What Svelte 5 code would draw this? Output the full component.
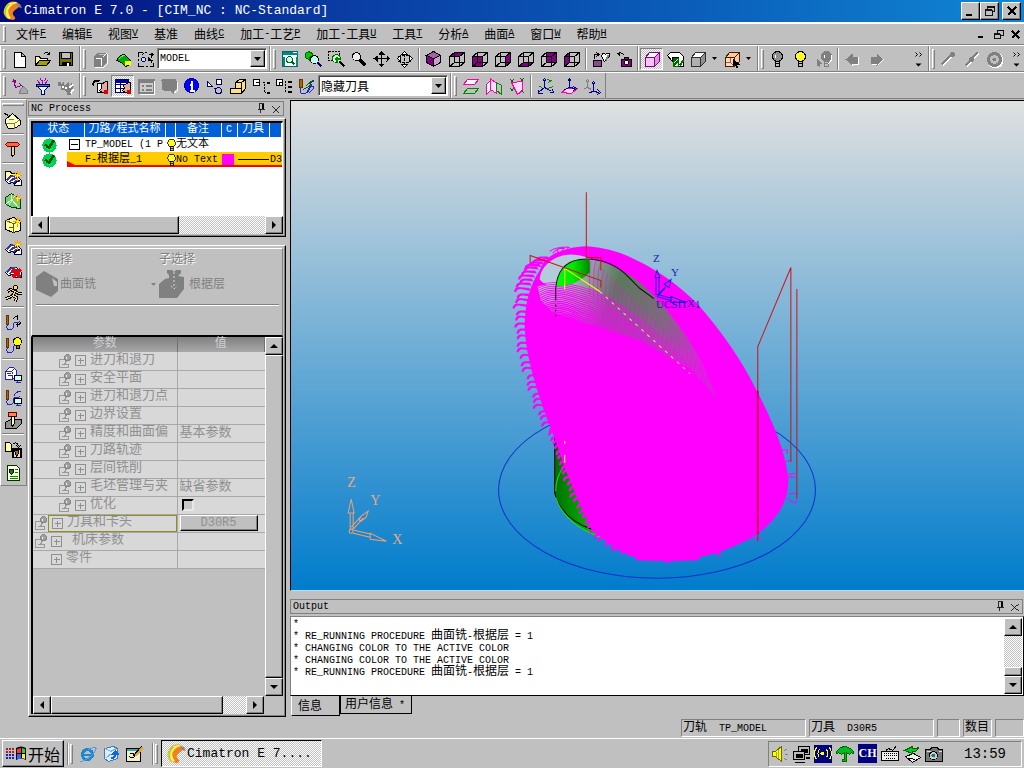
<script>
  const P = (d, f = 'none', s = 'none', w = 1) => `<path d="${d}" fill="${f}" stroke="${s}" stroke-width="${w}"/>`;
  const C = (x, y, r, f = 'none', s = 'none', w = 1) => `<circle cx="${x}" cy="${y}" r="${r}" fill="${f}" stroke="${s}" stroke-width="${w}"/>`;

  const K = '#000';
  const wire = 'M1 6h10v10h-10zM1 6l5-4h10l-5 4M16 2v10l-5 4M6 2v10l-5 4M6 12h10';
  const cube = (face) => P(face, '#800080') + P(wire, 'none', K);
  const solid = (f, top, side, s = K) => P('M2 7h9v9h-9z', f, s) + P('M2 7l4-5h10l-5 5z', top, s) + P('M11 7l5-5v9l-5 5z', side, s);
  const bulb = (f, x = 0, s = K) => C(8 + x, 6, 5, f, s) + P(`M${6 + x} 11h4v5h-4zM${6 + x} 13h4`, '#c0c0c0', s) + P(`M${6 + x} 4v3`, 'none', '#fff');
  const star = P('M13 1v10M8 6h10M10 3l6 6M16 3l-6 6', 'none', '#f90') + P('M13 4v4M11 6h4', 'none', '#ff0');
  const stripes = P('M1 11l5-5h6l5 5v5h-6l-3-3l-4 1z', '#fff', '#003') + P('M2 11q4-6 9-4M5 13q3-5 8-4M9 14q2-3 6-3', 'none', '#3a3a9c', 2) + P('M10 16q0-4 6-5', 'none', '#003');
  const path = P('M2 2h2v9h-2z', '#a60', '#630') + P('M3 11q-2 5 2 5t4-4q0-4 2-3t4-1', 'none', '#22c', 1);
  const monitor = P('M10 10h7v5h-7z', '#cff', K) + P('M11 17h5M13 15v2', 'none', '#22c');
  const dn = '#808080';

  const icons = {
    new: P('M3 2h7l4 4v11h-11zM10 2v4h4', '#fff', K),
    open: P('M1 15v-9h4l1 2h7v2', '#ffff9c', K) + P('M1 15l4-5h11l-4 5z', '#a0a000', K) + P('M9 4q3-4 6 0M15 1v3h-3', 'none', K),
    save: P('M2 2h13v13h-13z', '#707000', K) + P('M4 2h9v6h-9z', '#c0c0c0', K) + P('M4 11h9v4h-9z', K) + P('M9 12h2v3h-2z', '#fff'),
    layers: P('M2 6l4-4h9v10l-4 4h-9z', dn) + P('M4 8h6v7M11 7l4-4M3 17h9l4-4v-10', 'none', '#fff') + P('M7 4h6', 'none', '#c0c0c0'),
    part: P('M2 10q3-6 8-6l6 6v4l-5 2q-4-5-9-6z', '#0a0', K) + P('M10 10l6 1v3l-5 1z', '#ff0') + P('M4 9q3-4 6-4', 'none', '#5f5'),
    convert: P('M5 2h-4v4M1 12v4h5M12 16h4v-4', 'none', K) + P('M7 2h2M1 8v2M8 16h2', 'none', K) + C(6, 9, 2, '#cdf', '#006') + P('M11 4h5M14 2v5M4 5l2-2', 'none', K) + P('M11 7l3 3h-3zM13 13l2-3', '#000', K) + P('M12 4l3-2v4z', K),
    zoomall: P('M1 1h15v15h-15z', '#fff', '#066') + P('M1 1h15v3h-15z', '#088') + P('M2 6v9M15 6v9', 'none', '#088', 2) + C(8, 9, 3, '#cff', '#060') + P('M10 11l3 3', 'none', '#060', 2) + P('M11 2h4', 'none', '#fff'),
    zoompart: P('M1 3l3-2l4 2v4l-4 2l-3-2z', '#0c0', '#060') + P('M5 7l3-2l5 1v5l-5 1l-3-2z', '#0c0', '#060') + C(10, 9, 4, '#bfe', K) + P('M13 12l4 4', 'none', '#006', 2),
    zoomwin: P('M1 1h11v9h-11z', 'none', K).replace('/>', ' stroke-dasharray="2 1"/>') + C(9, 8, 4, '#cfc', '#060') + P('M7 8h5M9 6v5', 'none', '#080', 2) + P('M12 11l5 5', 'none', K, 2),
    zoom: C(6, 6, 4, '#eee', K) + P('M9 9l6 6', 'none', K, 3),
    pan: P('M8 1v15M1 8h15', 'none', K) + P('M8 0l3 4h-6zM8 17l3-4h-6zM0 8l4-3v6zM17 8l-4-3v6z', K),
    rotate: P('M8 3v12M2 6q6-2 13 0M2 11q6 2 13 0', 'none', K).replace('/>', ' stroke-dasharray="3 1"/>') + P('M8 1l3 3h-6zM8 17l3-3h-6zM1 8l3-3v6zM16 8l-3-3v6z', '#fff', K),
    iso: P('M1 5l7-4l7 4v7l-7 4l-7-4z', '#800080', K) + P('M1 5l7-4l7 4l-7 3z', '#a860a8', K) + P('M8 8l7-3v7l-7 4z', '#c9a0c9', K),
    top: cube('M1 6l5-4h10l-5 4z'),
    front: cube('M1 6h10v10h-10z'),
    right: cube('M11 6l5-4v10l-5 4z'),
    bottom: cube('M1 16l5-4h10l-5 4z'),
    back: cube('M6 2h10v10h-10z'),
    left: cube('M1 6l5-4v10l-5 4z'),
    lock: P('M1 10h8v6h-8z', '#904890', K) + P('M2 8v-4h4M4 2l3 2l-3 2', 'none', K) + P('M12 11l-3-5l1-3h2l1 1l1-1h3v3z', '#fff', K) + P('M13 10l3-5', 'none', dn, 2),
    camera: P('M6 9h10v7h-10z', '#808', K) + P('M9 7h4v2h-4z', '#808', K) + C(11, 12, 2, '#fff', K) + P('M1 4q4-4 8 1', 'none', K) + P('M0 2l4 0v4z', K),
    shade: solid('#f4c4f4', '#fff', '#e090e0', '#808'),
    section: P('M1 5l3-3h9l4 4v10h-5v-9h-6v4z', '#fff', K) + P('M7 8h5v8h-5z', '#cfc', '#060') + P('M7 11l3-3M7 15l5-5M13 15l4-5', 'none', '#060', 2),
    grey: solid('#b0b0b0', '#fff', '#909090', '#303030'),
    pick: solid('#ffd8b8', '#ffc8a0', '#ffc8a0', '#402000') + P('M2 12h5l4 4M7 12v-5', 'none', '#a06040') + P('M9 8l8 6h-4l2 3l-2 1l-2-4l-2 2z', K),
    bulboff: bulb('#909090'),
    bulbon: bulb('#ff0'),
    bulbpick: bulb(dn, 3, dn) + P('M1 8l6 5h-3l1 4l-4-2z', dn) + P('M13 13q4-3 3-8', 'none', '#fff', 1),
    prev: P('M1 9l7-6v3h5v7h-5v2z', dn) + P('M8 15v-1h6v-8', 'none', '#fff'),
    next: P('M16 9l-7-6v3h-6v7h6v2z', dn) + P('M10 15l6-6M4 14h5', 'none', '#fff'),
    endpt: P('M2 15l10-10', 'none', '#fff', 2) + P('M1 14l10-10', 'none', dn, 2) + C(12, 4, 2, dn, dn),
    midpt: P('M3 16l12-13', 'none', '#fff', 2) + P('M2 15l12-13', 'none', dn, 2) + C(8, 9, 2, dn, dn),
    center: C(9, 10, 7, 'none', '#fff', 2) + C(8, 9, 6, 'none', dn, 3) + C(8, 9, 2, dn),

    tpath: P('M2 2l2 8l6-2l3 5M1 4l3-2M8 6l2 2M4 2v3', 'none', '#808') + P('M9 12l3-3l4 4v3h-8z', '#a8a8a8', dn),
    funnel: P('M3 9h11l-4 4v4h-3v-4z', '#dff', '#006') + P('M3 3l3 4M8 2v5M13 3l-3 4M6 1l1 3M11 1l-1 3', 'none', '#a0a') + P('M2 7h13v2h-13z', '#66c', '#006'),
    hands: P('M0 4h3v3l3-3v3h2l3-3v4l3-3v4l3-1l-4 7v3h-4v-3l-3-3h-3v-3l-3-1z', dn) + P('M4 9h2M8 9v2M12 10l4-3M13 16l3-4', 'none', '#fff', 2),
    proc: P('M6 6h7v9h-7z', '#fff', K) + P('M1 8q2-7 7-4', 'none', K, 2) + P('M10 7l4-3h2v9l-3 3l-5-3l2-2z', '#e8a8a0', K) + P('M12 12h4v4h-4z', '#d00'),
    grid: P('M1 2h13v13h-13zM1 7h13M1 11h8M6 2v13', '#fff', '#006') + P('M1 2h13v3h-13z', '#0000a0') + P('M9 8l5-3h2v9l-3 2l-5-3l2-2z', '#e8a8a0', K) + P('M12 12h4v4h-4z', '#d00'),
    form: P('M1 2h15v13h-15z', '#ccc', dn, 2) + P('M2 4h13M4 8h2M4 12h2M8 8h6M8 12h6', 'none', dn, 2) + P('M2 17h15v-14', 'none', '#fff'),
    balloon: P('M1 3q0-2 2-2h11q2 0 2 2v8q0 2-2 2h-1v4l-4-4h-6q-2 0-2-2z', dn) + P('M17 4v8q0 2-3 3', 'none', '#fff'),
    info: C(8, 8, 7, '#00f', '#00a') + P('M8 3v3M6 7h2v6M6 13h5', 'none', '#fff', 2),
    shapes: P('M1 4l5 5h-5z', '#fff', '#006') + P('M10 2h5v5h-5z', '#fff', '#006') + C(12, 13, 3, 'none', '#006') + P('M7 11h3', 'none', '#006'),
    block: P('M1 11h5v-6l4-3h6v9l-4 5h-11z', '#ffe080', K) + P('M6 5h6v6h-6M12 5l4-3M12 11v5', 'none', K),
    collapse: P('M1 2h6v6h-6zM3 5h3', '#fff', K) + P('M10 5h2v10h1', 'none', K).replace('/>', ' stroke-dasharray="2 1"/>') + P('M14 5h3M14 15h3', 'none', K, 2),
    expand: P('M1 2h6v6h-6zM3 5h3M4 4v3', '#fff', K) + P('M10 3v12', 'none', K).replace('/>', ' stroke-dasharray="2 1"/>') + P('M12 4h4M12 9h4M12 14h4', 'none', K, 2),
    simulate: P('M1 2h3v8h-3z', '#a60', '#630') + P('M2 11q-1 6 4 5t5-6t5-7M8 16q2-7 6-7t-3 6', 'none', '#22c', 1) + P('M5 12l9-5M8 8l7-6', 'none', '#060'),
    sheets: P('M5 2h11l-4 5h-11z', '#fff', '#f0a') + P('M5 11h11l-4 5h-11z', 'none', '#080'),
    fold: P('M1 7l4-4v10l-4 4z', '#fff', '#f0a') + P('M5 1l6 5v10l-6-4z', '#fdf', '#f0a') + P('M11 5l5 3v9l-5-4z', 'none', '#080'),
    patch: P('M3 5l11-1v9l-5 4z', '#fdf', '#f0a') + P('M2 2l3 3M5 2l-3 3M12 1l3 3M15 1l-3 3M2 11l3 3M5 11l-3 3M13 13l3 3', 'none', '#060'),
    axes1: P('M7 2v8M7 10l7 4M7 10l-5 4M5 4l2-3l2 3M12 15h4l-1-3M1 12v4h4', 'none', '#009', 1) + P('M11 5l4-3M10 11l6-2M10 2l3 1M2 9l3 1', 'none', '#080'),
    axes2: P('M1 15l5-4h11l-6 5z', '#fdf', '#f0a') + P('M9 1v9l6 1M9 10l-5 2M7 4l2-3l2 3M13 9l3 2l-3 2', 'none', '#009', 1),
    axes3: P('M4 3v7l4 2M2 5l2-3l2 3M1 11l3-1', 'none', dn) + P('M10 5v9l6 1M10 14l-4 1M8 7l2-3l2 3M14 12l3 3l-3 2', 'none', '#009'),

    stock: P('M1 12v-4l7-6l8 7v4l-6 4h-6z', '#ffffc0', K) + P('M1 12h9v5M10 12l6-4M4 8h5', 'none', '#808040') + P('M0 2l4 2', 'none', K, 1),
    tool: P('M3 2h10l2 2l-2 2h-10l-2-2z', '#f64', '#800') + P('M7 6h3v8l-2 2l-1-2z', '#fc8', K),
    fstar: P('M1 2h5l1 2h6v6h-12z', '#ffffa0', K) + stripes + star,
    gstar: P('M1 5l6-4l9 6v9l-8-1l-7-3z', '#7c7', '#040') + P('M7 1v6l8 9M1 12l6-5M4 13l6-9', 'none', '#cfc') + star,
    ystar: P('M1 5l8-3l7 4v9l-7 2l-8-3z', '#ffffa0', K) + P('M1 5l8 3v9M9 8l7-2M4 12h4', 'none', '#606000') + star,
    sstar: stripes + star,
    delete: stripes + P('M8 8l8 8M16 8l-8 8', 'none', '#e00', 3),
    run: C(11, 3, 2, '#ffe060', K) + P('M3 7l3-2l5 2l-3 4l4 2l-1 4M8 11l-3 2l-4 1M11 7l3 2h3', 'none', K, 3) + P('M3 7l3-2l5 2l-3 4l4 2l-1 4M8 11l-3 2l-4 1M11 7l3 2h3', 'none', '#ffe060', 1),
    redo: path + P('M9 6q1-4 5-2M13 1v5M16 8q0 4-4 3M13 9v4', 'none', K),
    pbulb: path + C(13, 5, 4, '#ff0', K) + P('M12 9h3v3h-3z', '#880', K),
    bmon: P('M1 6l4-4h4l3 3v5l-4 4h-7z', '#fff', '#22c') + P('M1 6h6l2 3M7 6l3-3M3 10h5v4M2 8h4', 'none', '#22c', 1) + monitor,
    pmon: path + P('M9 8q3-6 8-5', 'none', '#22c') + monitor,
    press: P('M1 11l5-3h11v4l-5 5h-11z', '#909090', K) + P('M4 1h8v4h-8z', '#f84', '#600') + P('M7 5h3v7l-2 3l-1-2z', '#ffb', K),
    post: P('M1 2h4l2 2v7h-6z', '#ffffa0', K) + P('M9 3q4-2 5 3M12 5l2 2l2-2', 'none', K) + P('M8 8h8v9h-8z', '#ddd', K, 2) + P('M10 10h4v3l-2 3l-1-3z', '#a60', K),
    report: P('M3 2h9l3 3v12h-12z', '#ffffe0', '#003000') + P('M5 6h4v3l-2 2l-2-2z', '#080', K) + P('M10 6h3M10 9h3M5 13h8M5 15h8', 'none', '#080'),

    ie: C(8, 9, 5, 'none', '#28c', 3) + P('M4 9h9', 'none', '#28c', 2) + P('M1 15q0 2 4 0q9-5 12-12q-3-2-8 1', 'none', '#59e', 1),
    mail: P('M2 3l9-2l4 2v10l-9 3l-4-3z', '#def', '#47b') + P('M3 3l5 3l6-3M4 12l5-4', 'none', '#7ae') + P('M8 13q5 0 5-5', 'none', '#16d', 2) + P('M9 9l4-5l4 5z', '#16d'),
    desk: P('M1 3h14v13h-14z', '#eec', K) + P('M1 3h14v2h-14z', '#3aa') + P('M5 8q4-1 4 3q-3 3-5 0', 'none', K, 1) + P('M9 10l8-8', 'none', '#da2', 3) + P('M7 11l9-10', 'none', K, 1),
    speaker: P('M2 6h3l6-5v15l-6-5h-3z', '#ff0', '#660') + P('M6 6v5M8 4v9', 'none', '#aa0') + P('M14 5l3-2M14 9h3M14 13l3 2', 'none', dn),
    net: P('M6 1h11v8h-11z', '#bbb', K) + P('M8 3h7v4h-7z', K) + P('M1 6h11v8h-11z', '#bbb', K) + P('M3 8h7v4h-7zM2 16h10v1h-10zM13 11h4v2h-4z', K),
    wave: P('M-1-1h20v20h-20z', '#000080') + C(8, 8, 2, '#ff0') + P('M5 4q-3 4 0 8M2 2q-4 6 0 12M12 4q3 4 0 8M15 2q4 6 0 12', 'none', '#ff0', 1),
    umbrella: P('M-1 9q2-7 9-8q8 1 10 8l-3-2l-2 2l-3-2v9h-4v-2h2v-7l-3 2l-3-2z', '#0b2', '#060'),
    keyboard: P('M0 6h17v9h-17z', '#eee', K) + P('M2 8h14M2 10h14M4 13h9', 'none', K).replace('/>', ' stroke-dasharray="1 1"/>') + P('M4 6q2-4 5-2t5-3', 'none', K),
    eject: P('M2 11l8-3l7 4l-8 5z', '#eee', K) + P('M6 13l6 1', 'none', K) + P('M1 5l8 3v-2q4 1 6-4q-3 2-6 1v-2z', '#0c2', '#060'),
    photo: P('M0 4h5l1-2h6l1 2h4v12h-17z', '#777', K) + C(8, 10, 4, '#ccc', K) + C(8, 10, 2, '#088') + P('M1 6h4M13 6h3', 'none', '#ddd'),
    ok: C(9, 9, 8, '#00d050') + P('M4 8l4 4l6-9', 'none', '#050', 3) + P('M4 10q3 5 9 2', 'none', '#0f6'),
    min: P('M3 13h7', 'none', K, 2),
    restore: P('M6 3h8v6h-8zM6 4h8', 'none', K) + P('M3 7h8v7h-8z', '#c0c0c0', K) + P('M3 8h8', 'none', K),
    close: P('M4 4l9 9M13 4l-9 9', 'none', K, 2),
    min2: P('M4 12h6', 'none', K, 2),
    restore2: P('M7 4h7v6h-7zM7 5h7', 'none', K) + P('M3 8h7v6h-7z', '#c0c0c0', K) + P('M3 9h7', 'none', K),
    close2: P('M4 5l8 8M12 5l-8 8', 'none', K, 2),
    pin: P('M4 9h9M6 2h6M7 2v7M8 9v5', 'none', K) + P('M11 2v7', 'none', K, 2),
    shut: P('M4 4l9 9M13 4l-9 9', 'none', K)
  };

  const menus = ['文件F', '编辑E', '视图V', '基准', '曲线C', '加工-工艺P', '加工-工具U', '工具T', '分析A', '曲面A', '窗口W', '帮助H'];
  const row1b = ['zoomall', 'zoompart', 'zoomwin', 'zoom', 'pan', 'rotate', '|', 'iso', 'top', 'front', 'right', 'bottom', 'back', 'left', '|', 'lock', 'camera'];
  const row2b = ['proc', '*grid', 'form', 'balloon', 'info', 'shapes', 'block', 'collapse', 'expand', 'simulate'];
  const row2c = ['sheets', 'fold', 'patch', '|', 'axes1', 'axes2', 'axes3'];
  const side = ['stock', '|', 'tool', '|', 'fstar', 'gstar', 'ystar', 'sstar', 'delete', 'run', '|', 'redo', 'pbulb', '|', 'bmon', 'pmon', 'press', '|', 'post', 'report'];
  const params = [
    { name: '进刀和退刀' }, { name: '安全平面' }, { name: '进刀和退刀点' }, { name: '边界设置' },
    { name: '精度和曲面偏', value: '基本参数' }, { name: '刀路轨迹' }, { name: '层间铣削' },
    { name: '毛坯管理与夹', value: '缺省参数' }, { name: '优化', check: true },
    { name: '刀具和卡头', kind: 'current', button: 'D30R5' },
    { name: '机床参数', kind: 'outer' }, { name: '零件', kind: 'plain' }
  ];
  const log = ['*', '* RE_RUNNING PROCEDURE 曲面铣-根据层 = 1', '* CHANGING COLOR TO THE ACTIVE COLOR', '* CHANGING COLOR TO THE ACTIVE COLOR', '* RE_RUNNING PROCEDURE 曲面铣-根据层 = 1'];
  const tray = ['speaker', 'net', 'wave', 'umbrella', 'CH', 'keyboard', 'eject', 'photo'];

  const runs = (s) => s.split(/([\u4e00-\u9fff]+)/).filter(Boolean).map((x) => ({ x, zh: /[\u4e00-\u9fff]/.test(x) }));

  // Hooked lead-in moves along the left flank of the tool path.
  const flank = [[545, 258], [534, 268], [527, 284], [525, 306], [526, 330], [530, 356], [538, 382], [545, 406], [555, 428], [560, 446], [567, 466], [575, 488], [585, 510], [596, 530], [616, 546], [640, 555]];
  const teeth = [];
  for (let i = 0; i < flank.length - 1; i++) {
    const [a, b] = flank[i], [c, d] = flank[i + 1];
    for (let j = 0; j < 4; j++) {
      const x = a + ((c - a) * j) / 4, y = b + ((d - b) * j) / 4;
      const w = i < 8 ? 10 + ((i + j) % 4) : 7 + ((i * j) % 3);
      const h = i < 2 ? 0 : (i + j) % 2;
      teeth.push(`M${x + 3} ${y - 2}l${-w + 2} ${-h}q-4 1 -4 5l2 0q1-3 4-3l${w - 2} ${1 + h}z`);
    }
  }
  const lerp = (a, b, t) => a + (b - a) * t;
  const passes = Array.from({ length: 22 }, (_, k) => {
    const t = k / 21;
    return {
      d: `M${lerp(537, 545, t)} ${lerp(286, 330, t)}Q${lerp(550, 555, t)} ${lerp(278, 312, t)} ${lerp(580, 580, t)} ${lerp(286, 330, t)}Q${lerp(640, 590, t)} ${lerp(300, 334, t)} ${lerp(716, 620, t)} ${lerp(398, 350, t)}`,
      w: lerp(0.8, 1.8, t)
    };
  });
  const shadow = Array.from({ length: 30 }, (_, k) => {
    const t = k / 29;
    return `M${lerp(592, 708, t)} ${lerp(257, 372, t)}q-3 8 ${lerp(-2, -4, t)} ${lerp(38, 24, t)}`;
  });
</script>

{#snippet t(s)}<span class="t">{#each runs(s) as r}<span class:zh={r.zh}>{r.x}</span>{/each}</span>{/snippet}
{#snippet ic(name)}<svg class="ic" viewBox="-.5 -.5 18 18" aria-hidden="true">{@html icons[name]}</svg>{/snippet}
{#snippet logo()}
  <svg class="logo" viewBox="0 0 20 20" aria-hidden="true">
    <path d="M15 1Q7-1 3 6T6 18l5 1q4-1 1-4t1-6 5-4z" fill="#f08020" />
    <path d="M14 1Q6 0 3 7T7 18l2-1Q4 11 8 6t8-3z" fill="#f8f060" />
    <path d="M6 3q-6 6-2 13l2 2Q1 10 8 3z" fill="#a0d820" />
    <path d="M14 2l4 1 2 4-4-1z" fill="#888" />
  </svg>
{/snippet}
{#snippet tools(list)}
  {#each list as n}
    {#if n === '|'}<i class="sep"></i>{:else}
      <button class="tb" class:on={n[0] === '*'} aria-label={n.replace('*', '')}>{@render ic(n.replace('*', ''))}</button>
    {/if}
  {/each}
{/snippet}
{#snippet arrow(dir)}
  <button class="arr raised" aria-label={'scroll ' + dir}>
    <svg viewBox="0 0 8 8" width="8" height="8"><path d={{ up: 'M0 6h8L4 2z', down: 'M0 2h8L4 6z', left: 'M6 0v8L2 4z', right: 'M2 0v8l4-4z' }[dir]} /></svg>
  </button>
{/snippet}
{#snippet combo(label, value)}
  <div class="combo">
    <select aria-label={label} class:cjk={value !== 'MODEL'}><option>{value}</option></select>
    <span class="drop raised"><svg viewBox="0 0 7 4" width="7" height="4"><path d="M0 0h7L3.5 4z" /></svg></span>
  </div>
{/snippet}
{#snippet more()}
  <button class="more" aria-label="more"><svg viewBox="-.5 -.5 8 18" width="8" height="18"><path d="M0 2l2 2l-2 2M4 2l2 2l-2 2" fill="none" stroke="#000" /><path d="M0 13h6l-3 3z" /></svg></button>
{/snippet}
{#snippet drop()}<svg class="tri" viewBox="0 0 5 3"><path d="M0 0h5L2.5 3z" /></svg>{/snippet}

<div class="app">
  <header class="title">
    {@render logo()}
    <h1>Cimatron E 7.0 - [CIM_NC : NC-Standard]</h1>
    <button class="raised" aria-label="minimize">{@render ic('min')}</button>
    <button class="raised" aria-label="restore">{@render ic('restore')}</button>
    <button class="raised last" aria-label="close">{@render ic('close')}</button>
  </header>

  <nav class="menu">
    <i class="grip"></i>
    {#each menus as m}
      <button>{#each runs(m) as r, i}<span class:zh={r.zh} class:key={!r.zh && r.x !== '-'}>{r.x}</span>{/each}</button>
    {/each}
    <span class="fill"></span>
    <button class="mdi" aria-label="minimize document">{@render ic('min2')}</button>
    <button class="mdi" aria-label="restore document">{@render ic('restore2')}</button>
    <button class="mdi" aria-label="close document">{@render ic('close2')}</button>
  </nav>

  <div class="bar">
    <div class="seg"><i class="grip"></i>{@render tools(['new', 'open', 'save'])}</div>
    <div class="seg"><i class="grip"></i>{@render tools(['layers', 'part', 'convert'])}<div class="w1">{@render combo('set', 'MODEL')}</div></div>
    <div class="seg"><i class="grip"></i>{@render tools(row1b)}</div>
    <div class="seg bare">{@render tools(['*shade', 'section', 'grey'])}{@render drop()}{@render tools(['pick'])}{@render drop()}</div>
    <div class="seg wide"><i class="grip"></i>{@render tools(['bulboff', 'bulbon', 'bulbpick', '|', 'prev', 'next'])}<span class="fill"></span>{@render more()}</div>
    <div class="seg end"><i class="grip"></i>{@render tools(['endpt', 'midpt', 'center'])}<span class="fill"></span>{@render more()}</div>
  </div>
  <div class="bar">
    <div class="seg"><i class="grip"></i>{@render tools(['tpath', 'funnel', 'hands'])}</div>
    <div class="seg"><i class="grip"></i>{@render tools(row2b)}<div class="w2">{@render combo('tool display', '隐藏刀具')}</div></div>
    <div class="seg"><i class="grip"></i>{@render tools(row2c)}</div>
  </div>

  <main>
    <div class="sidecol">
      <aside class="side"><i class="hgrip"></i>
        {@render tools(side)}
      </aside>
    </div>

    <section class="panel">
      <div class="caption"><h2>NC Process</h2><button aria-label="pin">{@render ic('pin')}</button><button aria-label="close panel">{@render ic('shut')}</button></div>

      <div class="frame tree">
        <div class="treebody">
          <table>
            <colgroup><col class="c1" /><col class="c2" /><col class="c3" /><col class="c4" /><col class="c5" /><col class="c6" /><col /></colgroup>
            <thead><tr><th>{@render t('状态')}</th><th>{@render t('刀路/程式名称')}</th><th></th><th>{@render t('备注')}</th><th>C</th><th>{@render t('刀具')}</th><th></th></tr></thead>
            <tbody>
              <tr>
                <td><div class="st">{@render ic('ok')}<span class="box"></span></div></td>
                <td>{@render t('TP_MODEL (1 P')}</td>
                <td class="lamp">{@render ic('bulbon')}</td>
                <td colspan="4">{@render t('无文本')}</td>
              </tr>
              <tr class="active">
                <td class="first"><div class="st">{@render ic('ok')}<svg class="tick" viewBox="0 0 8 6"><path d="M0 0l8 4v2H0z" fill="#f00" /></svg></div></td>
                <td>{@render t('F-根据层_1')}</td>
                <td class="lamp">{@render ic('bulbon')}</td>
                <td>{@render t('No Text')}</td>
                <td><span class="swatch"></span></td>
                <td><span class="rule"></span></td>
                <td>D3</td>
              </tr>
            </tbody>
          </table>
        </div>
        <div class="hs">{@render arrow('left')}<span class="thumb raised t1"></span><span class="fill"></span>{@render arrow('right')}</div>
      </div>

      <div class="frame lower">
        <div class="choose">
          <div class="labels"><span>{@render t('主选择')}</span><span>{@render t('子选择')}</span></div>
          <div class="picks">
            <button disabled><svg width="24" height="26" viewBox="0 0 24 26"><path d="M8 0l14 8v12l-7 6L0 19V6z" fill="#808080" /><path d="M16 7l5 4v4h-3z" fill="#c0c0c0" /></svg>{@render t('曲面铣')}<span class="fill"></span><svg class="tri" viewBox="0 0 5 3"><path d="M0 0h5L2.5 3z" fill="#808080" /></svg></button>
            <button disabled><svg width="26" height="28" viewBox="0 0 26 28"><path d="M8 0h5l2 2 2-2h5v3l-3 3 6 1v12l-7 9H0V14l6-5 4-1V5L8 3z" fill="#808080" /><path d="M15 2v14M12 16l3 3 3-3" stroke="#d8d8d8" fill="none" stroke-dasharray="2 2" /></svg>{@render t('根据层')}</button>
          </div>
          <hr />
        </div>
        <div class="scroller">
          <div class="params">
            <table>
              <thead><tr><th>{@render t('参数')}</th><th>{@render t('值')}</th></tr></thead>
              <tbody>
                {#each params as p}
                  <tr>
                    <td><div class={'node ' + (p.kind ?? 'inner')}>
                      <svg class="lk" viewBox="-.5 -.5 14 16"><path d="M5 6h-4v8h9v-4M3 11h5" fill="none" stroke="#989898" /><path d="M8 7l-2 4h3" fill="none" stroke="#989898" /><circle cx="9" cy="4" r="3" fill="#a0a0a0" stroke="#888" /><path d="M8 3v2" stroke="#eee" /></svg>
                      <span class="hold"><svg class="plus" viewBox="-.5 -.5 11 11"><path d="M0 0h10v10h-10zM2 5h6M5 2v6" fill="none" stroke="#909090" /></svg>{@render t(p.name)}</span>
                    </div></td>
                    <td>{#if p.check}<input type="checkbox" aria-label={p.name} />{:else if p.button}<button class="val raised" disabled>{p.button}</button>{:else if p.value}{@render t(p.value)}{/if}</td>
                  </tr>
                {/each}
              </tbody>
            </table>
          </div>
          <div class="vs">{@render arrow('up')}<span class="thumb raised tall"></span>{@render arrow('down')}</div>
          <div class="hs">{@render arrow('left')}<span class="thumb raised t2"></span><span class="fill"></span>{@render arrow('right')}</div>
        </div>
      </div>
    </section>

    <section class="work">
      <div class="view">
        <svg viewBox="292 101 731 488" preserveAspectRatio="xMidYMid meet" role="img" aria-label="model view">
          <defs>
            <linearGradient id="mesh" x1="0" x2="1" y1=".2" y2=".5"><stop offset="0" stop-color="#b0c8dc" /><stop offset=".2" stop-color="#9ca8ac" /><stop offset=".4" stop-color="#5a7a5a" /><stop offset=".7" stop-color="#806880" /><stop offset="1" stop-color="#e020e0" /></linearGradient>
            <linearGradient id="dome"><stop offset="0" stop-color="#00ff00" /><stop offset=".5" stop-color="#00e800" /><stop offset="1" stop-color="#008800" /></linearGradient>
            <linearGradient id="body"><stop offset="0" stop-color="#007000" /><stop offset="1" stop-color="#00e000" /></linearGradient>
          </defs>
          <ellipse cx="657" cy="489" rx="158" ry="88" fill="none" stroke="#1030d0" />
          <path d="M555 418V492Q560 520 600 536L612 538L590 440z" fill="url(#body)" />
          <path d="M555 420V492Q562 518 592 528" fill="none" stroke="#000" />
          <path d="M556 496Q564 524 606 538M565 465Q556 475 556 490" fill="none" stroke="#20e020" />
          <g fill="#f0f">
            <path d="M540 270Q543 259 557 252Q575 245 590 246Q613 248 633 258Q668 274 697 303Q735 346 757 391Q786 446 788 480Q788 510 757 533Q724 553 690 557L640 558Q620 551 607 541L592 529L580 503L565 467L556 440Q544 412 533 374Q526 348 525 327Q525 292 540 270z" />
            {#each teeth as d}<path {d} />{/each}
            <path d="M637 553l-1 6 30 1 1 3 3-3 28-1 3-4 16-3 2 4 2-6z" />
          </g>
          <path d="M540 279Q541 265 557 257Q570 251 588 257L601 263Q590 287 566 287Q548 289 540 279z" fill="#b4cbd9" />
          <path d="M538 286Q545 283 560 286Q580 282 592 259Q630 267 657 299Q700 345 716 398L690 368L640 340L590 324L553 312L541 300z" fill="url(#mesh)" />
          <g fill="none" stroke="#f0f">
            {#each passes as p}<path d={p.d} stroke-width={p.w} />{/each}
          </g>
          <g fill="none" stroke="#f0f" stroke-width="1">
            {#each shadow as d}<path {d} opacity=".6" />{/each}
            <path d="M550 251q6-5 20-4M553 253q5-6 12-5M558 247v5M563 246v5M568 246v4" />
            <path d="M782 449h5v4M783 461l8-2M787 474l8-2M787 476h8M786 497l9 5 2-5M788 493l8-1M750 537h12" />
          </g>
          <path d="M557 286Q559 262 580 259L590 259V272Q577 285 557 286z" fill="url(#dome)" />
          <path d="M556 300V288Q558 262 580 259Q605 256 625 273L640 288 654 298" fill="none" stroke="#101010" />
          <path d="M556 304v14" stroke="#101010" stroke-dasharray="2 3" />
          <path d="M565 289V268" fill="none" stroke="#ff0" />
          <path d="M565 268L600 291" fill="none" stroke="#ff0" />
          <path d="M600 291L690 373" fill="none" stroke="#ffd890" stroke-dasharray="3 5" />
          <path d="M565 440v3M565 454v8" stroke="#ff0" />
          <g fill="none" stroke="#d01018">
            <path d="M586.5 192V257H601V270M530.5 262V255L601 280V287" />
            <path d="M757.5 540V346L790.5 267V461M796.5 288.500V497" />
          </g>
          <path d="M757.5 390V533" stroke="#d00060" stroke-width="2" />
          <g fill="none" stroke="#2020e0">
            <path d="M656 294V277h3v17zM655 277l2-7 3 7zM659 293l8-8M657 296l8-8M664 284l7-5-2 8zM658 294l14 4M657 296l14 4M671 296l15 6-15 0z" />
          </g>
          <g class="ax" fill="#1818b0"><text x="653" y="262">Z</text><text x="671" y="276">Y</text><text x="687" y="306">X</text><text x="656" y="307">UCSIT</text><text x="695" y="307">1</text></g>
          <g fill="none" stroke="#f0a070">
            <path d="M351 528V512h3v16zM349 512l3-14 3 14zM354 528l10-11M352 526l10-11M360 519l2-4 7-5-2 6-5 4zM355 529l17 4M354 532l17 4M371 532l16 8-16-2z" /><circle cx="352" cy="530" r="2" />
          </g>
          <g class="ax big" fill="#e8a888"><text x="348" y="486">Z</text><text x="371" y="504">Y</text><text x="393" y="543">X</text></g>
        </svg>
      </div>

      <div class="caption out"><h2>Output</h2><button aria-label="pin output">{@render ic('pin')}</button><button aria-label="close output">{@render ic('shut')}</button></div>
      <div class="output">
        <div class="log">{#each log as l}<p>{@render t(l)}</p>{/each}</div>
        <div class="vs">{@render arrow('up')}<span class="fill"></span><span class="thumb raised short"></span>{@render arrow('down')}</div>
      </div>
      <div class="tabs"><button class="sel">{@render t('信息')}</button><button>{@render t('用户信息 *')}</button></div>
    </section>
  </main>

  <footer class="status">
    <span class="a">{@render t('刀轨  TP_MODEL')}</span><span class="a">{@render t('刀具  D30R5')}</span><span class="b"></span><span class="c">{@render t('数目')}</span><span class="c"></span>
  </footer>

  <div class="task">
    <button class="start raised">
      <svg width="21" height="16" viewBox="0 0 21 16"><path d="M10 2q5-3 10 0v12q-5-3-10 0z" fill="#000" /><path d="M11 3l4-1v5h-4z" fill="#f33" /><path d="M16 2l3 1v4h-3z" fill="#3c3" /><path d="M11 8h4v5l-4 0z" fill="#36f" /><path d="M16 8h3v5l-3-1z" fill="#fe3" /><path d="M1 2v12M4 2v12M7 2v12" stroke="#a22" stroke-width="2" stroke-dasharray="2 1" /><path d="M1 8v6M4 8v6M7 8v6" stroke="#22a" stroke-width="2" stroke-dasharray="2 1" /></svg>
      {@render t('开始')}
    </button>
    <i class="sep"></i><i class="grip"></i>
    {@render tools(['ie', 'mail', 'desk'])}
    <i class="gap"></i><i class="sep"></i><i class="grip"></i>
    <button class="running">{@render logo()}<span>Cimatron E 7....</span></button>
    <span class="fill"></span>
    <div class="tray">
      {#each tray as n}{#if n === 'CH'}<b>CH</b>{:else}{@render ic(n)}{/if}{/each}
      <time>13:59</time>
    </div>
  </div>
</div>

<style>
  :global(body) { background: #c0c0c0; }
  .app { --g: #c0c0c0; --dither: repeating-conic-gradient(#fff 0 25%, #c0c0c0 0 50%) 0 0 / 2px 2px; min-height: 100vh; display: flex; flex-direction: column; background: var(--g); color: #000; font: 10px/14px "Liberation Mono", "Noto Sans CJK SC", monospace; }
  .app :is(button, select, input) { font: inherit; color: inherit; margin: 0; padding: 0; border: 0; border-radius: 0; background: none; box-sizing: border-box; }
  .app * { box-sizing: border-box; }
  h1, h2, p { margin: 0; font: inherit; }
  i { display: block; flex: none; }
  .t { white-space: pre; }
  .zh { font-family: "Noto Sans CJK SC", sans-serif; font-size: 12px; line-height: 0; }
  .ic { width: 18px; height: 18px; display: block; flex: none; shape-rendering: crispEdges; }
  .fill { flex: 1; }
  .app .raised { background: var(--g); border: 1px solid; border-color: #fff #000 #000 #fff; box-shadow: inset -1px -1px #808080; }
  .logo { width: 20px; height: 20px; flex: none; }

  .title { display: flex; align-items: center; height: 22px; padding: 0 3px 0 2px; background: linear-gradient(to right, #000a78, #0a3ca4 33%, #0a5cb8 66%, #1086d4); color: #fff; }
  .title h1 { flex: 1; font-size: 13px; line-height: 22px; margin-left: 2px; white-space: nowrap; }
  .title button { width: 19px; height: 18px; display: grid; place-items: center; overflow: hidden; }
  .title .last { margin-left: 3px; }
  .title .ic { width: 16px; height: 16px; }

  .menu { display: flex; align-items: center; height: 23px; border-top: 2px solid #fff; border-bottom: 1px solid #808080; }
  .app .menu button { padding: 0 8px; height: 20px; line-height: 24px; white-space: nowrap; display: flex; align-items: center; }
  .menu .grip { margin: 0 2px 0 3px; height: 16px; }
  .app .menu .zh { line-height: 20px; }
  .key { text-decoration: underline; }
  .app .menu .mdi { padding: 0; width: 17px; display: grid; place-items: center; }
  .mdi .ic { width: 16px; height: 16px; }

  .bar { display: flex; height: 27px; border-top: 1px solid #fff; border-bottom: 1px solid #808080; }
  .seg { display: flex; align-items: center; border-right: 1px solid #808080; border-left: 1px solid #fff; padding-right: 2px; }
  .grip { width: 3px; height: 20px; margin: 0 2px 0 2px; border: 1px solid; border-color: #fff #808080 #808080 #fff; }
  .bare { padding: 0 3px 0 1px; }
  .wide { width: 171px; flex: none; }
  .end { flex: 1; border-right: 0; padding-right: 0; }
  .tb { width: 23px; height: 23px; flex: none; display: grid; place-items: center; }
  .bar .tb { height: 22px; }
  .app .tb.on { background: var(--dither); border: 1px solid; border-color: #808080 #fff #fff #808080; }
  .sep { width: 2px; height: 22px; margin: 0 2px; border-left: 1px solid #808080; border-right: 1px solid #fff; }
  .w1 { width: 110px; }
  .w2 { width: 130px; }
  .combo { display: grid; height: 21px; background: #fff; border: 1px solid; border-color: #808080 #fff #fff #808080; box-shadow: inset 1px 1px #404040; }
  .combo > * { grid-area: 1 / 1; }
  .app .combo select { appearance: none; width: 100%; padding-left: 2px; line-height: 18px; }
  .app .combo .cjk { font-family: "Noto Sans CJK SC", sans-serif; font-size: 12px; }
  .drop { justify-self: end; width: 15px; margin: 1px; display: grid; place-items: center; pointer-events: none; }
  .tri { width: 5px; height: 3px; margin: 0 3px; flex: none; }
  .more { width: 14px; display: grid; place-items: center; }

  main { flex: 1; display: flex; min-height: 0; }
  .sidecol { width: 27px; flex: none; }
  .side { display: flex; flex-direction: column; align-items: center; border: 1px solid; border-color: #fff #808080 #808080 #fff; padding: 0 1px 2px 0; }
  .hgrip { width: 22px; height: 3px; margin: 3px 0 2px; border: 1px solid; border-color: #fff #808080 #808080 #fff; }
  .side .sep { width: 22px; height: 2px; margin: 2px 0; border: 0; border-top: 1px solid #808080; border-bottom: 1px solid #fff; }

  .panel { width: 259px; flex: none; display: flex; flex-direction: column; padding: 2px 0 0 1px; }
  .caption { display: flex; align-items: center; height: 15px; border: 1px solid #808080; padding-left: 2px; margin-right: 2px; }
  .caption h2 { flex: 1; }
  .caption button { width: 15px; height: 13px; display: grid; place-items: center; }
  .caption .ic { width: 14px; height: 14px; }
  .frame { border: 1px solid; border-color: #fff #000 #000 #fff; padding: 2px; display: flex; flex-direction: column; box-shadow: inset -1px -1px #808080; }
  .tree { height: 119px; margin-top: 2px; }
  .treebody { flex: 1; background: #fff; border: 2px solid #000; border-right: 1px solid #fff; border-bottom: 0; }
  table { border-collapse: collapse; table-layout: fixed; width: 100%; }
  th, td { padding: 0; font-weight: normal; text-align: left; white-space: nowrap; }
  .c1 { width: 51px; } .c2 { width: 81px; } .c3 { width: 10px; } .c4 { width: 46px; } .c5 { width: 16px; } .c6 { width: 32px; }
  .tree th { background: #0060d8; color: #fff; text-align: center; height: 14px; line-height: 14px; border-right: 1px solid #fff; }
  .tree th .zh { font-size: 11px; }
  .tree td { height: 15px; line-height: 14px; padding-left: 1px; }
  .tree td .zh { font-size: 11px; }
  .st { display: flex; align-items: center; height: 15px; padding-left: 7px; gap: 12px; }
  .st .ic { width: 16px; height: 16px; }
  .box { width: 11px; height: 11px; border: 1px solid #000; background: linear-gradient(#000, #000) center / 7px 1px no-repeat; }
  .tree .lamp { padding: 0; }
  .lamp .ic { width: 14px; height: 14px; margin-right: -4px; position: relative; }
  .active td { background: linear-gradient(to top, #f00 2px, #fc0 2px); }
  .tree .active .first { background: linear-gradient(to right, #fff 34px, transparent 34px), linear-gradient(to top, #f00 2px, #fc0 2px); }
  .active .st { gap: 10px; }
  .tick { width: 8px; height: 6px; align-self: flex-end; flex: none; }
  .swatch { display: block; width: 12px; height: 11px; background: #f0f; }
  .rule { display: block; height: 1px; background: #000; }
  .hs { display: flex; height: 18px; background: var(--dither); }
  .arr { width: 18px; height: 18px; flex: none; display: grid; place-items: center; }
  .t1 { width: 130px; }
  .t2 { width: 172px; }

  .lower { flex: 1; margin: 8px 0 1px; }
  .choose { height: 89px; border: 1px solid #fff; border-bottom: 2px solid #000; border-right: 1px solid #808080; padding: 3px 3px 0 4px; color: #808080; }
  .choose .t { text-shadow: 1px 1px #fff; }
  .labels, .picks { display: grid; grid-template-columns: 123px 1fr; }
  .labels { line-height: 18px; }
  .picks button { display: flex; align-items: center; height: 28px; }
  .app .picks .t { text-shadow: none; padding-top: 4px; }
  .picks button:last-child { gap: 4px; }
  hr { margin: 6px 0 0; border: 0; border-top: 1px solid #808080; border-bottom: 1px solid #fff; }
  .scroller { flex: 1; display: grid; grid-template: 1fr 18px / 1fr 18px; border-left: 2px solid #000; }
  .params { color: #909090; }
  .params table { border-bottom: 1px solid #808080; }
  .params th { height: 15px; line-height: 15px; background: linear-gradient(#808080, #a8a8a8); color: #d0d0d0; text-align: center; border-right: 1px solid #707070; }
  .params th:first-child { width: 144px; }
  .params td { height: 18px; line-height: 17px; background: #d8d8d8; border-bottom: 1px solid #a8a8a8; border-right: 1px solid #a8a8a8; }
  .params td + td { border-right: 0; padding-left: 2px; }
  .params td .zh { font-size: 13px; }
  .node { display: flex; align-items: center; height: 17px; line-height: 20px; padding-left: 25px; }
  .lk { width: 14px; height: 16px; flex: none; shape-rendering: crispEdges; }
  .hold { display: flex; align-items: center; gap: 4px; padding-left: 3px; flex: 1; height: 17px; }
  .plus { width: 11px; height: 11px; flex: none; shape-rendering: crispEdges; }
  .current, .outer, .plain { padding-left: 1px; }
  .current .hold { border: 1px solid #909020; }
  .outer .hold { gap: 10px; }
  .plain .lk { visibility: hidden; }
  .app .params input { appearance: none; display: block; width: 12px; height: 12px; background: #c8c8c8; border: 2px solid; border-color: #000 #e8e8e8 #e8e8e8 #000; margin-left: 2px; }
  .app .val { display: block; width: 78px; height: 16px; line-height: 12px; font-size: 12px; color: #909090; }
  .vs { display: flex; flex-direction: column; background: var(--dither); }
  .tall { flex: 1; }
  .scroller .hs { margin-right: 1px; }

  .work { flex: 1; min-width: 0; display: flex; flex-direction: column; padding-left: 4px; }
  .view { flex: 1; min-height: 0; margin-top: 1px; border: 1px solid #000; border-right: 0; border-bottom: 1px solid #b8e0f8; background: linear-gradient(#e0e0e0, #007ccc); display: grid; }
  .view svg { width: 100%; height: 100%; min-height: 0; }
  .ax { font: 11px "Liberation Serif", serif; }
  .big { font-size: 14px; }
  .out { margin: 8px 1px 2px 0; }
  .output { height: 80px; display: flex; border: 1px solid; border-color: #808080 #000 #000 #808080; box-shadow: inset 1px 1px #fff; padding: 1px; background: #fff; }
  .log { flex: 1; padding: 0 1px; }
  .log p { height: 12px; line-height: 14px; }
  .short { height: 9px; }
  .tabs { display: flex; align-items: flex-start; height: 22px; padding-left: 1px; }
  .tabs button { height: 18px; line-height: 19px; }
  .app .tabs button { padding: 0 6px 0 4px; border: 1px solid #000; border-top: 0; }
  .app .tabs .sel { height: 20px; width: 49px; text-align: left; border-left-color: #fff; padding-left: 6px; line-height: 24px; }

  .status { display: flex; justify-content: flex-end; gap: 3px; height: 20px; padding: 1px 0; }
  .status > span { flex: none; border: 1px solid; border-color: #808080 #fff #fff #808080; height: 18px; line-height: 18px; padding-left: 1px; }
  .a { width: 125px; } .b { width: 23px; } .c { width: 29px; }

  .task { display: flex; align-items: center; height: 32px; border-top: 1px solid #fff; padding: 0 2px 2px; }
  .start { display: flex; align-items: center; gap: 1px; width: 62px; height: 27px; }
  .app .start { padding-left: 3px; }
  .app .start .zh { font-size: 16px; line-height: 24px; }
  .task .sep { margin: 0 1px 0 3px; }
  .task .grip { margin: 0 3px 0 0; }
  .task .gap { width: 4px; }
  .running { display: flex; align-items: center; gap: 1px; width: 161px; height: 27px; }
  .app .running { padding-left: 4px; background: var(--dither); border: 1px solid; border-color: #000 #fff #fff #000; font-size: 13px; }
  .tray { display: flex; align-items: center; gap: 4px; height: 26px; border: 1px solid; border-color: #808080 #fff #fff #808080; padding: 0 15px 0 1px; }
  .tray b { width: 19px; height: 19px; background: #000080; color: #fff; font: bold 12px/19px "Liberation Serif", serif; text-align: center; }
  .tray time { font-size: 14px; margin-left: 17px; }
</style>
